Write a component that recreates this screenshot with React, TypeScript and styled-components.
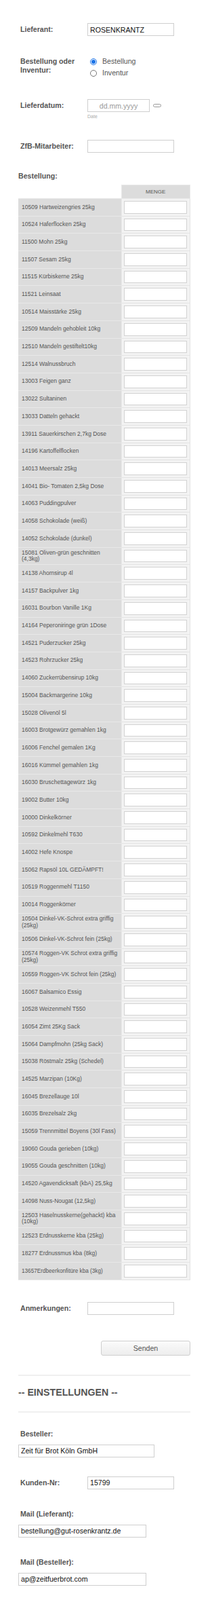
import styled, { createGlobalStyle } from "styled-components";

const GlobalStyle = createGlobalStyle`
  body {
    margin: 0;
    background: #fff;
    font-family: "Liberation Sans", Arial, sans-serif;
  }
  * { box-sizing: border-box; }
`;

const Page = styled.div`
  padding: 0 29px 20px 27px;
  color: #555;
`;

const Row = styled.div<{ $top: number }>`
  display: flex;
  align-items: flex-start;
  margin-top: ${(p) => p.$top}px;
`;

const Label = styled.label`
  width: 102px;
  flex: none;
  padding: 3px 0 0 3px;
  font-size: 10.6px;
  line-height: 12.5px;
  font-weight: bold;
  color: #555;
`;

const StackLabel = styled.div<{ $top: number }>`
  margin-top: ${(p) => p.$top}px;
  padding-left: 3px;
  font-size: 10.6px;
  line-height: 12px;
  font-weight: bold;
  color: #555;
`;

const TextInput = styled.input<{ $w?: number; $top?: number }>`
  display: block;
  width: ${(p) => p.$w ?? 128}px;
  height: 19px;
  margin-top: ${(p) => p.$top ?? 0}px;
  border: 1px solid #cfcfcf;
  padding: 0 3px;
  font-family: inherit;
  font-size: 10.6px;
  color: #111;
  background: #fff;
  outline: none;
  &::placeholder { color: #999; }
`;

const RadioGroup = styled.div`
  display: flex;
  flex-direction: column;
`;

const RadioOption = styled.label`
  display: flex;
  align-items: center;
  height: 17px;
  font-size: 10.6px;
  color: #555;
  input {
    width: 10px;
    height: 10px;
    margin: 2px 8px 0 4px;
    accent-color: #1a73e8;
  }
`;

const DateCol = styled.div`
  display: flex;
  flex-direction: column;
`;

const DateLine = styled.div`
  display: flex;
  align-items: center;
`;

const DateInput = styled(TextInput)`
  text-align: center;
  &::placeholder { color: #9a9a9a; }
`;

const Pill = styled.span`
  width: 12px;
  height: 5px;
  margin-left: 5px;
  border: 1px solid #9a9a9a;
  border-radius: 3px;
`;

const Hint = styled.span`
  margin-top: 3px;
  font-size: 7px;
  color: #aaa;
`;

const Heading = styled.div<{ $top: number; $big?: boolean }>`
  margin-top: ${(p) => p.$top}px;
  font-size: ${(p) => (p.$big ? 14.2 : 10.6)}px;
  line-height: ${(p) => (p.$big ? 16 : 12)}px;
  font-weight: bold;
  color: #555;
`;

const Table = styled.table`
  margin-top: 7px;
  width: 254px;
  border-collapse: collapse;
  table-layout: fixed;
`;

const HeadCell = styled.th<{ $blank?: boolean }>`
  height: 20px;
  padding: 0;
  font-size: 8px;
  font-weight: normal;
  color: #555;
  background: ${(p) => (p.$blank ? "transparent" : "#dcdcdc")};
  border: ${(p) => (p.$blank ? "none" : "1px solid #e8e8e8")};
  border-bottom: 1px solid #e8e8e8;
`;

const NameCell = styled.td<{ $small?: boolean }>`
  width: 152px;
  height: 25.7px;
  padding: 0 4px 0 5px;
  background: #dcdcdc;
  border: 1px solid #e8e8e8;
  border-left: none;
  font-size: ${(p) => (p.$small ? 8.2 : 8.5)}px;
  line-height: 9.5px;
  color: #555;
  vertical-align: middle;
`;

const QtyCell = styled.td`
  height: 25.7px;
  padding: 3px 4px 3px 3px;
  background: #f3f3f3;
  border: 1px solid #e4e4e4;
  vertical-align: middle;
`;

const QtyInput = styled.input`
  display: block;
  width: 100%;
  height: 18.7px;
  border: 1px solid #d2d2d2;
  background: #fff;
  outline: none;
`;

const ButtonRow = styled.div`
  display: flex;
  justify-content: flex-end;
  margin-top: 38px;
`;

const SendButton = styled.button`
  width: 132px;
  height: 22px;
  border: 1px solid #cfcfcf;
  border-radius: 3px;
  background: linear-gradient(#fbfbfb, #ededed);
  font-family: inherit;
  font-size: 10.6px;
  color: #555;
`;

const Rule = styled.hr<{ $top: number }>`
  margin: ${(p) => p.$top}px 0 0;
  border: none;
  border-top: 2px solid #f0f0f0;
`;

const items: string[] = [
  "10509 Hartweizengries 25kg",
  "10524 Haferflocken 25kg",
  "11500 Mohn 25kg",
  "11507 Sesam 25kg",
  "11515 Kürbiskerne 25kg",
  "11521 Leinsaat",
  "10514 Maisstärke 25kg",
  "12509 Mandeln gehobleit 10kg",
  "12510 Mandeln gestiftelt10kg",
  "12514 Walnussbruch",
  "13003 Feigen ganz",
  "13022 Sultaninen",
  "13033 Datteln gehackt",
  "13911 Sauerkirschen 2,7kg Dose",
  "14196 Kartoffelflocken",
  "14013 Meersalz 25kg",
  "14041 Bio- Tomaten 2,5kg Dose",
  "14063 Puddingpulver",
  "14058 Schokolade (weiß)",
  "14052 Schokolade (dunkel)",
  "15081 Oliven-grün geschnitten (4,3kg)",
  "14138 Ahornsirup 4l",
  "14157 Backpulver 1kg",
  "16031 Bourbon Vanille 1Kg",
  "14164 Peperoniringe grün 1Dose",
  "14521 Puderzucker 25kg",
  "14523 Rohrzucker 25kg",
  "14060 Zuckerrübensirup 10kg",
  "15004 Backmargerine 10kg",
  "15028 Olivenöl 5l",
  "16003 Brotgewürz gemahlen 1kg",
  "16006 Fenchel gemalen 1Kg",
  "16016 Kümmel gemahlen 1kg",
  "16030 Bruschettagewürz 1kg",
  "19002 Butter 10kg",
  "10000 Dinkelkörner",
  "10592 Dinkelmehl T630",
  "14002 Hefe Knospe",
  "15062 Rapsöl 10L GEDÄMPFT!",
  "10519 Roggenmehl T1150",
  "10014 Roggenkörner",
  "10504 Dinkel-VK-Schrot extra griffig (25kg)",
  "10506 Dinkel-VK-Schrot fein (25kg)",
  "10574 Roggen-VK Schrot extra griffig (25kg)",
  "10559 Roggen-VK Schrot fein (25kg)",
  "16067 Balsamico Essig",
  "10528 Weizenmehl T550",
  "16054 Zimt 25Kg Sack",
  "15064 Dampfmohn (25kg Sack)",
  "15038 Röstmalz 25kg (Schedel)",
  "14525 Marzipan (10Kg)",
  "16045 Brezellauge 10l",
  "16035 Brezelsalz 2kg",
  "15059 Trennmittel Boyens (30l Fass)",
  "19060 Gouda gerieben (10kg)",
  "19055 Gouda geschnitten (10kg)",
  "14520 Agavendicksaft (kbA) 25,5kg",
  "14098 Nuss-Nougat (12,5kg)",
  "12503 Haselnusskerne(gehackt) kba (10kg)",
  "12523 Erdnusskerne kba (25kg)",
  "18277 Erdnussmus kba (8kg)",
  "13657Erdbeerkonfitüre kba (3kg)",
];

export default function App() {
  return (
    <Page>
      <GlobalStyle />

      <Row $top={34}>
        <Label>Lieferant:</Label>
        <TextInput defaultValue="ROSENKRANTZ" />
      </Row>

      <Row $top={28}>
        <Label>Bestellung oder Inventur:</Label>
        <RadioGroup>
          <RadioOption>
            <input type="radio" name="art" defaultChecked />
            Bestellung
          </RadioOption>
          <RadioOption>
            <input type="radio" name="art" />
            Inventur
          </RadioOption>
        </RadioGroup>
      </Row>

      <Row $top={31}>
        <Label>Lieferdatum:</Label>
        <DateCol>
          <DateLine>
            <DateInput $w={92} placeholder="dd.mm.yyyy" />
            <Pill />
          </DateLine>
          <Hint>Date</Hint>
        </DateCol>
      </Row>

      <Row $top={31}>
        <Label>ZfB-Mitarbeiter:</Label>
        <TextInput />
      </Row>

      <Heading $top={28}>Bestellung:</Heading>

      <Table>
        <thead>
          <tr>
            <HeadCell $blank style={{ width: 152 }} />
            <HeadCell>MENGE</HeadCell>
          </tr>
        </thead>
        <tbody>
          {items.map((item, i) => (
            <tr key={item}>
              <NameCell $small={i === items.length - 1}>{item}</NameCell>
              <QtyCell>
                <QtyInput />
              </QtyCell>
            </tr>
          ))}
        </tbody>
      </Table>

      <Row $top={32}>
        <Label>Anmerkungen:</Label>
        <TextInput />
      </Row>

      <ButtonRow>
        <SendButton>Senden</SendButton>
      </ButtonRow>

      <Rule $top={28} />
      <Heading $top={16} $big>
        -- EINSTELLUNGEN --
      </Heading>
      <Rule $top={20} />

      <StackLabel $top={25}>Besteller:</StackLabel>
      <TextInput $w={201} $top={10} defaultValue="Zeit für Brot Köln GmbH" />

      <Row $top={28}>
        <Label>Kunden-Nr:</Label>
        <TextInput defaultValue="15799" />
      </Row>

      <StackLabel $top={30}>Mail (Lieferant):</StackLabel>
      <TextInput $w={189} $top={10} defaultValue="bestellung@gut-rosenkrantz.de" />

      <StackLabel $top={30}>Mail (Besteller):</StackLabel>
      <TextInput $w={189} $top={10} defaultValue="ap@zeitfuerbrot.com" />
    </Page>
  );
}
